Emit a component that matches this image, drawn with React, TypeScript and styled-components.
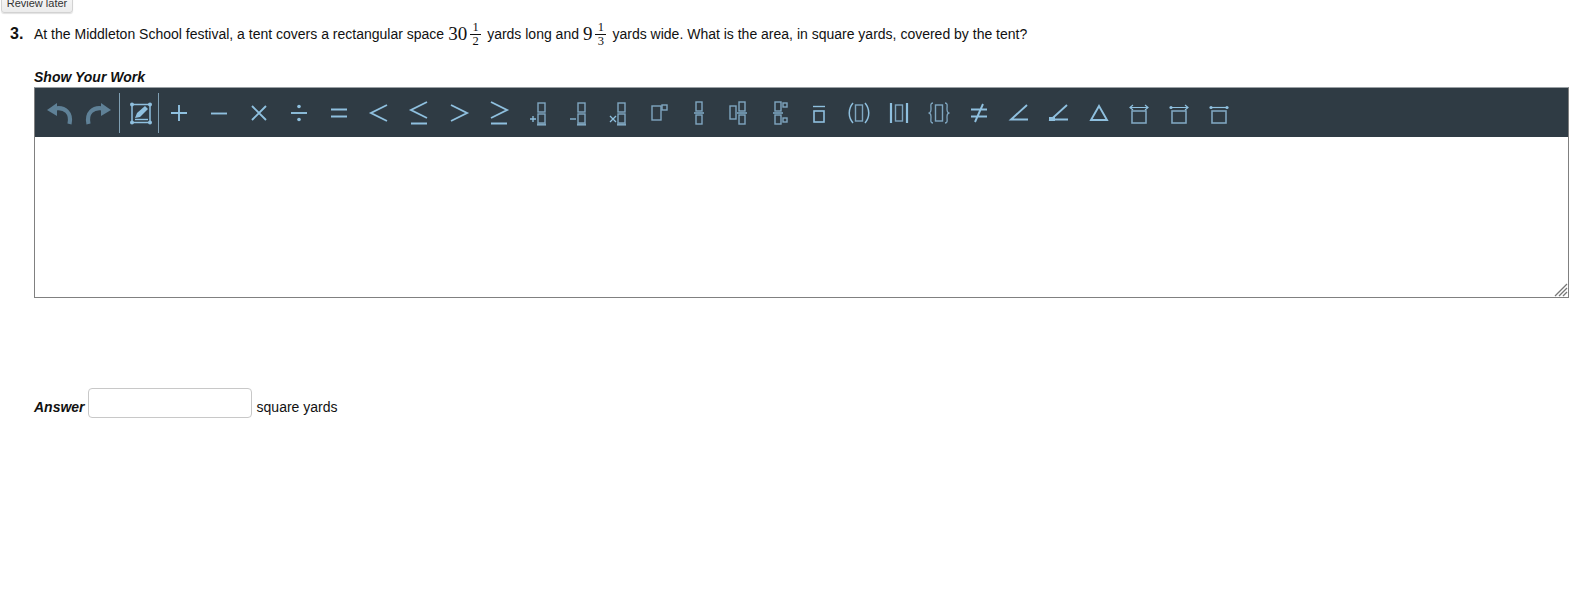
import styled, { createGlobalStyle } from "styled-components";
import { ReactNode } from "react";

const GlobalStyle = createGlobalStyle`
  html, body {
    margin: 0;
    padding: 0;
    background: #fff;
    overflow: hidden;
  }
  body {
    font-family: "Liberation Sans", Arial, sans-serif;
    font-size: 14px;
    color: #111;
  }
`;

const Glyph = ({ children, muted }: { children: ReactNode; muted?: boolean }) => (
  <svg
    width="40"
    height="50"
    viewBox="0 0 40 50"
    fill="none"
    stroke={muted ? "#5f8197" : "#8fc0df"}
    strokeWidth="1.9"
  >
    {children}
  </svg>
);

const Dot = ({ x, y, r = 1.6 }: { x: number; y: number; r?: number }) => (
  <circle cx={x} cy={y} r={r} fill="#8fc0df" stroke="none" />
);

// 小さい四角（数式のプレースホルダー）
const Slot = ({ x, y, w = 7, h = 9 }: { x: number; y: number; w?: number; h?: number }) => (
  <rect x={x} y={y} width={w} height={h} stroke="#7fa6c0" strokeWidth="1.4" />
);

const icons: ReactNode[] = [
  <Glyph muted key="undo">
    <path d="M8 22 L18 15 L18 28 Z" fill="#5f8197" stroke="none" />
    <path d="M16 20.5 C26 18.5 33 25 30.5 36" strokeWidth="4.2" />
  </Glyph>,
  <Glyph muted key="redo">
    <path d="M32 22 L22 15 L22 28 Z" fill="#5f8197" stroke="none" />
    <path d="M24 20.5 C14 18.5 7 25 9.5 36" strokeWidth="4.2" />
  </Glyph>,
  <Glyph key="draw">
    <rect x="13" y="16.5" width="18" height="18" strokeWidth="1.5" />
    <Dot x={13} y={16.5} r={2} />
    <Dot x={31} y={16.5} r={2} />
    <Dot x={13} y={34.5} r={2} />
    <Dot x={31} y={34.5} r={2} />
    <path d="M16 30 L18 25 L26 18 L29 21 L21 29 Z" fill="#8fc0df" stroke="none" />
    <path d="M16 31.5 H29" strokeWidth="1.4" />
  </Glyph>,
  <Glyph key="plus">
    <path d="M20 17 V33 M12 25 H28" />
  </Glyph>,
  <Glyph key="minus">
    <path d="M12 25.5 H28" />
  </Glyph>,
  <Glyph key="times">
    <path d="M13 18 L27 32 M27 18 L13 32" />
  </Glyph>,
  <Glyph key="divide">
    <path d="M12 25 H28" />
    <Dot x={20} y={18.5} r={1.8} />
    <Dot x={20} y={31.5} r={1.8} />
  </Glyph>,
  <Glyph key="equals">
    <path d="M12 21.5 H28 M12 28.5 H28" />
  </Glyph>,
  <Glyph key="lt">
    <path d="M28 17 L12 25 L28 33" />
  </Glyph>,
  <Glyph key="lte">
    <path d="M28 14 L12 22 L28 30 M12 35.5 H28" />
  </Glyph>,
  <Glyph key="gt">
    <path d="M12 17 L28 25 L12 33" />
  </Glyph>,
  <Glyph key="gte">
    <path d="M12 14 L28 22 L12 30 M12 35.5 H28" />
  </Glyph>,
  <Glyph key="add-stack">
    <Slot x={19} y={15} />
    <Slot x={19} y={26} />
    <path d="M18 36.5 H27" stroke="#7fa6c0" strokeWidth="2.2" />
    <path d="M11 31 H17 M14 28 V34" strokeWidth="1.3" />
  </Glyph>,
  <Glyph key="sub-stack">
    <Slot x={19} y={15} />
    <Slot x={19} y={26} />
    <path d="M18 36.5 H27" stroke="#7fa6c0" strokeWidth="2.2" />
    <path d="M11 31 H17" strokeWidth="1.3" />
  </Glyph>,
  <Glyph key="mul-stack">
    <Slot x={19} y={15} />
    <Slot x={19} y={26} />
    <path d="M18 36.5 H27" stroke="#7fa6c0" strokeWidth="2.2" />
    <path d="M11 28 L17 34 M17 28 L11 34" strokeWidth="1.3" />
  </Glyph>,
  <Glyph key="power">
    <Slot x={13} y={18} w={9} h={14} />
    <Slot x={23} y={17} w={5} h={5} />
  </Glyph>,
  <Glyph key="fraction">
    <Slot x={17} y={14} w={6} h={9} />
    <Slot x={17} y={27} w={6} h={9} />
    <path d="M15 25 H25" strokeWidth="1.3" />
  </Glyph>,
  <Glyph key="mixed">
    <Slot x={11} y={18} w={6} h={13} />
    <Slot x={20} y={14} w={6} h={9} />
    <Slot x={20} y={27} w={6} h={9} />
    <path d="M18 25 H28" strokeWidth="1.3" />
  </Glyph>,
  <Glyph key="mixed-power">
    <Slot x={16} y={14} w={6} h={9} />
    <Slot x={16} y={27} w={6} h={9} />
    <Slot x={24} y={15} w={4} h={4} />
    <Slot x={24} y={30} w={4} h={4} />
    <path d="M14 25 H24" strokeWidth="1.3" />
  </Glyph>,
  <Glyph key="overline">
    <rect x="15" y="23" width="10" height="11" strokeWidth="1.6" />
    <path d="M14 18.5 H26" strokeWidth="1.4" />
  </Glyph>,
  <Glyph key="parens">
    <Slot x={16.5} y={17} w={7} h={16} />
    <path d="M14 15 C9 21 9 29 14 35 M26 15 C31 21 31 29 26 35" strokeWidth="1.5" />
  </Glyph>,
  <Glyph key="abs">
    <Slot x={16.5} y={17} w={7} h={16} />
    <path d="M12 15 V35 M28 15 V35" strokeWidth="2.2" />
  </Glyph>,
  <Glyph key="braces">
    <Slot x={16.5} y={17} w={7} h={16} />
    <path
      d="M14 15 C11 15 12 18 12 21 C12 24 11 25 9.5 25 C11 25 12 26 12 29 C12 32 11 35 14 35 M26 15 C29 15 28 18 28 21 C28 24 29 25 30.5 25 C29 25 28 26 28 29 C28 32 29 35 26 35"
      strokeWidth="1.3"
      stroke="#7fa6c0"
    />
  </Glyph>,
  <Glyph key="neq">
    <path d="M12 21.5 H28 M12 28.5 H28 M24 16 L16 34" />
  </Glyph>,
  <Glyph key="angle">
    <path d="M28 17 L12 31.5 H29" />
  </Glyph>,
  <Glyph key="measured-angle">
    <path d="M28 17 L12 31.5 H29" />
    <rect x="10" y="29" width="6" height="4" fill="#8fc0df" stroke="none" />
  </Glyph>,
  <Glyph key="triangle">
    <path d="M20 18 L28 32 H12 Z" />
  </Glyph>,
  <Glyph key="line">
    <rect x="13" y="23" width="14" height="12" strokeWidth="1.6" stroke="#7fa6c0" />
    <path d="M11 19.5 H29 M14 17 L11 19.5 L14 22 M26 17 L29 19.5 L26 22" strokeWidth="1.2" />
  </Glyph>,
  <Glyph key="ray">
    <rect x="13" y="23" width="14" height="12" strokeWidth="1.6" stroke="#7fa6c0" />
    <path d="M12 19.5 H29 M26 17 L29 19.5 L26 22" strokeWidth="1.2" />
    <Dot x={12} y={19.5} />
  </Glyph>,
  <Glyph key="segment">
    <rect x="13" y="23" width="14" height="12" strokeWidth="1.6" stroke="#7fa6c0" />
    <path d="M12 19.5 H28" strokeWidth="1.2" />
    <Dot x={12} y={19.5} />
    <Dot x={28} y={19.5} />
  </Glyph>,
];

const Fraction = ({ top, bottom }: { top: string; bottom: string }) => (
  <FractionBox>
    <span>{top}</span>
    <span>{bottom}</span>
  </FractionBox>
);

const App = () => {
  return (
    <Page>
      <GlobalStyle />
      <ReviewButton>Review later</ReviewButton>

      <Question>
        <QuestionNumber>3.</QuestionNumber>
        <QuestionText>
          At the Middleton School festival, a tent covers a rectangular space
          <MathValue>30</MathValue>
          <Fraction top="1" bottom="2" />
          yards long and
          <MathValue>9</MathValue>
          <Fraction top="1" bottom="3" />
          yards wide. What is the area, in square yards, covered by the tent?
        </QuestionText>
      </Question>

      <WorkSection>
        <SectionLabel>Show Your Work</SectionLabel>
        <Editor>
          <Toolbar>
            {icons.map((icon, i) => (
              <ToolButton key={i} $divided={i === 2}>
                {icon}
              </ToolButton>
            ))}
          </Toolbar>
          <EditArea>
            <ResizeHandle width="14" height="14" viewBox="0 0 14 14">
              <path d="M1 13 L13 1 M5 13 L13 5 M9 13 L13 9" stroke="#777" strokeWidth="1.3" />
            </ResizeHandle>
          </EditArea>
        </Editor>
      </WorkSection>

      <AnswerRow>
        <AnswerLabel>Answer</AnswerLabel>
        <AnswerInput />
        <AnswerUnit>square yards</AnswerUnit>
      </AnswerRow>
    </Page>
  );
};

export default App;

const Page = styled.div`
  width: 1586px;
  height: 599px;
  overflow: hidden;
`;

const ReviewButton = styled.button`
  display: block;
  width: 72px;
  height: 24px;
  margin: -11px 0 0 1px;
  padding: 4px 0 0;
  border: 1px solid #d2d2d2;
  border-radius: 3px;
  background: linear-gradient(#fafafa, #ececec);
  box-shadow: 0 1px 1px rgba(0, 0, 0, 0.12);
  font-family: "Liberation Sans", Arial, sans-serif;
  font-size: 11px;
  color: #333;
`;

const Question = styled.div`
  display: flex;
  align-items: center;
  height: 38px;
  margin-top: 3px;
  padding-left: 10px;
`;

const QuestionNumber = styled.div`
  width: 24px;
  margin-top: -3px;
  font-size: 16px;
  font-weight: bold;
`;

const QuestionText = styled.div`
  display: flex;
  align-items: center;
  margin-top: -2px;
  font-size: 14px;
  white-space: pre;
`;

const MathValue = styled.span`
  margin-left: 4px;
  font-family: "Liberation Serif", serif;
  font-size: 19px;
`;

const FractionBox = styled.span`
  display: inline-flex;
  flex-direction: column;
  align-items: center;
  width: 11px;
  margin: 0 6px 0 3px;
  font-family: "Liberation Serif", serif;
  font-size: 12.5px;
  line-height: 13px;

  span:first-child {
    border-bottom: 1px solid #111;
    width: 100%;
    text-align: center;
  }
`;

const WorkSection = styled.div`
  margin-top: 15px;
  padding: 0 17px 0 34px;
`;

const SectionLabel = styled.div`
  font-size: 14px;
  font-weight: bold;
  font-style: italic;
  line-height: 16px;
`;

const Editor = styled.div`
  margin-top: 2px;
  border: 1px solid #808080;
  border-top-color: #9aa0a4;
`;

const Toolbar = styled.div`
  display: flex;
  align-items: center;
  height: 49px;
  padding-left: 4px;
  background: #2f3b44;
`;

const ToolButton = styled.div<{ $divided?: boolean }>`
  flex: none;
  width: 40px;
  height: 50px;
  ${(props) =>
    props.$divided &&
    `
    background:
      linear-gradient(#7f9fb3, #7f9fb3) left 0 center / 1px 40px no-repeat,
      linear-gradient(#7f9fb3, #7f9fb3) right 0 center / 1px 40px no-repeat;
  `}
`;

const EditArea = styled.div`
  position: relative;
  height: 160px;
  background: #fff;
`;

const ResizeHandle = styled.svg`
  position: absolute;
  right: 0;
  bottom: 0;
`;

const AnswerRow = styled.div`
  display: flex;
  align-items: center;
  margin: 90px 0 0 34px;
`;

const AnswerLabel = styled(SectionLabel)`
  margin-top: 8px;
`;

const AnswerInput = styled.div`
  width: 162px;
  height: 28px;
  margin: 0 5px 0 3px;
  border: 1px solid #c8c8c8;
  border-radius: 4px;
  background: #fff;
`;

const AnswerUnit = styled.span`
  margin-top: 8px;
`;
